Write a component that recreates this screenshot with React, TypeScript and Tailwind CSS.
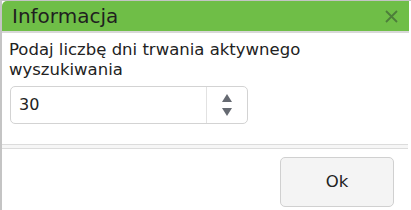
import { useState } from 'react';

export default function App() {
  const [days, setDays] = useState(30);

  return (
    <div className="w-[411px] h-[210px] bg-white overflow-hidden" style={{ fontFamily: '"DejaVu Sans", sans-serif' }}>
      <div className="h-full border-t border-l-2 border-[#c4c4c4] flex flex-col">
        {/* Title bar */}
        <div className="h-[32px] bg-[#6fbe47] rounded-tl-[5px] mr-[2px] flex items-center justify-between pl-[10px] pr-[11px] border-b-2 border-[#d8d8d8]">
          <span className="text-[20px] text-[#1f1f1f]">Informacja</span>
          <svg width="13" height="13" viewBox="0 0 13 13" className="text-[#4d7d3a]">
            <path d="M1 1 L12 12 M12 1 L1 12" stroke="currentColor" strokeWidth="1.8" />
          </svg>
        </div>

        {/* Body */}
        <div className="px-[7px] pt-[7px]">
          <p className="w-[345px] text-[16.5px] leading-[20px] text-[#222]">Podaj liczbę dni trwania aktywnego wyszukiwania</p>
          <div className="mt-[6px] ml-[1px] w-[238px] h-[38px] flex border border-[#d3d3d3] rounded-[5px]">
            <input
              type="text"
              value={days}
              onChange={e => setDays(Number(e.target.value) || 0)}
              className="flex-1 min-w-0 px-[8px] text-[16px] text-[#222] outline-none bg-transparent"
            />
            <div className="w-[41px] border-l border-[#e2e2e2] flex flex-col items-center justify-center gap-[6px]">
              <svg width="10" height="8" viewBox="0 0 10 8"><path d="M5 0 L10 8 L0 8 Z" fill="#666a72" /></svg>
              <svg width="10" height="8" viewBox="0 0 10 8"><path d="M0 0 L10 0 L5 8 Z" fill="#666a72" /></svg>
            </div>
          </div>
        </div>

        {/* Separator */}
        <div className="mt-[20px] mr-[3px] h-[5px] border-y border-[#dcdcdc] bg-[#f6f6f6]" />

        {/* Footer */}
        <div className="flex justify-end pt-[8px] pr-[17px]">
          <button className="w-[114px] h-[50px] rounded-[5px] border border-[#d0d0d0] bg-[#f4f4f4] text-[16.5px] text-[#222]">
            Ok
          </button>
        </div>
      </div>
    </div>
  );
}
